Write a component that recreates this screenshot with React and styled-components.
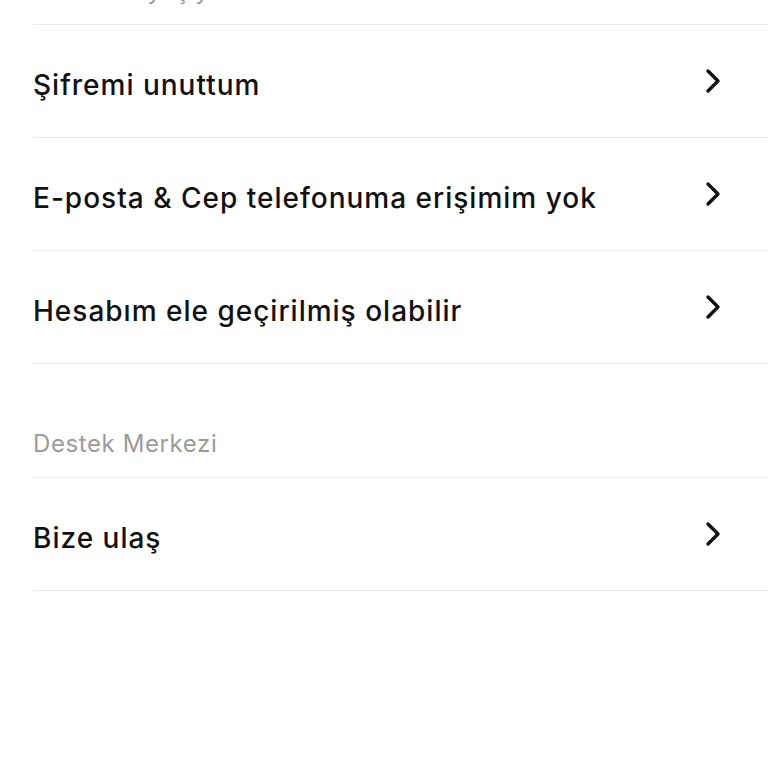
import React from 'react'
import styled, { createGlobalStyle } from 'styled-components'

const GlobalStyle = createGlobalStyle`
  html, body {
    margin: 0;
    padding: 0;
    background: #ffffff;
  }
  body {
    font-family: Inter, 'Noto Sans', sans-serif;
    color: #111111;
    overflow: hidden;
  }
`

const Page = styled.div`
  width: 768px;
  height: 768px;
  overflow: hidden;
  background: #fff;
`

const List = styled.div`
  margin-top: -59px;
  padding-left: 33px;
`

const SectionTitle = styled.div`
  display: flex;
  align-items: center;
  height: 32px;
  padding-top: ${(p) => (p.$first ? '33px' : '63px')};
  padding-bottom: 18px;
  border-bottom: 1px solid #ebebeb;
  font-size: 24px;
  font-weight: 400;
  letter-spacing: 0.6px;
  color: #9b9b9b;
`

const Row = styled.a`
  display: flex;
  align-items: center;
  justify-content: space-between;
  height: 112px;
  padding-right: 46px;
  border-bottom: 1px solid #ebebeb;
  text-decoration: none;
  color: #111;
`

const Label = styled.span`
  margin-top: 7px;
  font-size: 28px;
  font-weight: 500;
  letter-spacing: 1px;
`

const Chevron = () => (
  <svg width='18' height='26' viewBox='0 0 18 26' fill='none'>
    <polyline
      points='4,3 14,13 4,23'
      stroke='#111'
      strokeWidth='3.4'
      strokeLinecap='round'
      strokeLinejoin='round'
    />
  </svg>
)

const sections = [
  {
    title: 'Bir sorun yaşıyorum',
    items: ['Şifremi unuttum', 'E-posta & Cep telefonuma erişimim yok', 'Hesabım ele geçirilmiş olabilir'],
  },
  {
    title: 'Destek Merkezi',
    items: ['Bize ulaş'],
  },
]

const App = () => {
  return (
    <Page>
      <GlobalStyle />
      <List>
        {sections.map((s, i) => (
          <div key={s.title}>
            <SectionTitle $first={i === 0}>{s.title}</SectionTitle>
            {s.items.map((item) => (
              <Row href='#' key={item}>
                <Label>{item}</Label>
                <Chevron />
              </Row>
            ))}
          </div>
        ))}
      </List>
    </Page>
  )
}

export default App
